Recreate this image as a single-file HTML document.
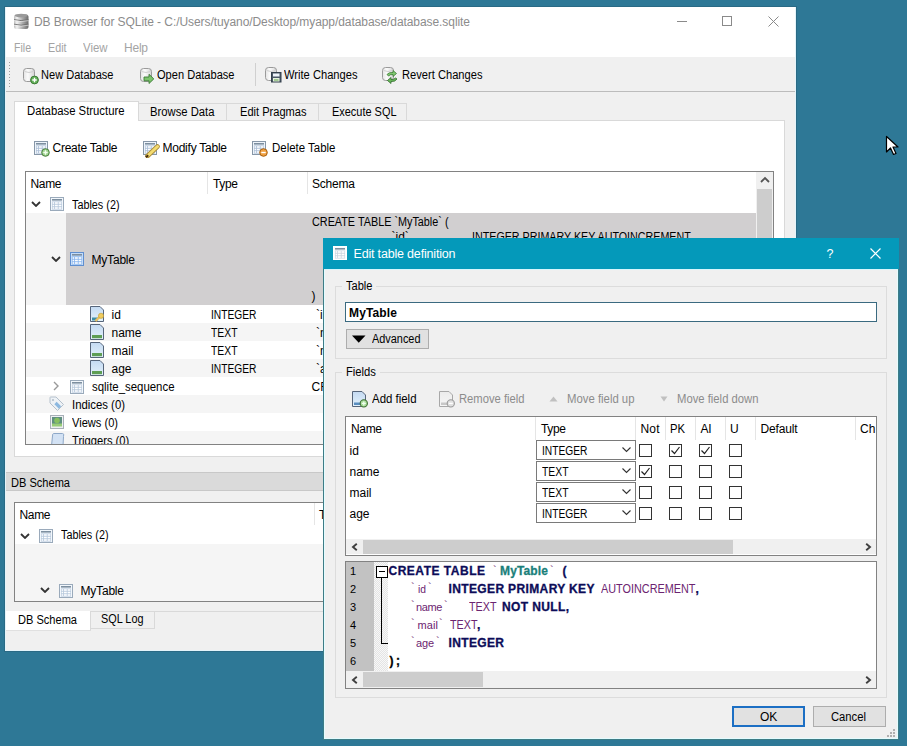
<!DOCTYPE html><html><head><meta charset="utf-8"><style>
*{margin:0;padding:0;box-sizing:border-box}
html,body{width:907px;height:746px;overflow:hidden;background:#2e7896}
body>div,body>svg{position:absolute}
div{position:absolute}
.t{white-space:pre;line-height:1;font-family:'Liberation Sans',sans-serif}
</style></head><body><div style="left:4px;top:6px;width:793px;height:646px;background:#2a6a85"></div>
<div style="left:5px;top:7px;width:791px;height:644px;background:#e4f4fa"></div>
<div style="left:6px;top:8px;width:789px;height:642px;background:#f0f0f0"></div>
<div style="left:6px;top:7px;width:789px;height:50px;background:#fff"></div>
<svg style="position:absolute;left:13px;top:13px" width="16" height="17" viewBox="0 0 16 17"><defs><linearGradient id="dbg" x1="0" x2="1"><stop offset="0" stop-color="#bdbdbd"/><stop offset="0.2" stop-color="#f2f2f2"/><stop offset="0.6" stop-color="#a8a8a8"/><stop offset="1" stop-color="#6c6c6c"/></linearGradient></defs><rect x="1" y="1.5" width="14.5" height="14.5" rx="2.5" fill="url(#dbg)"/><ellipse cx="8.2" cy="2.6" rx="6.5" ry="1.8" fill="#9a9a9a"/><path d="M1 6.6 Q8 8.6 15.5 6.6 M1 11.2 Q8 13.2 15.5 11.2" stroke="#6e6e6e" stroke-width="0.9" fill="none"/><path d="M1 7.6 Q8 9.6 15.5 7.6 M1 12.2 Q8 14.2 15.5 12.2" stroke="#f4f4f4" stroke-width="0.8" fill="none" opacity="0.7"/></svg>
<div class="t" style="left:34px;top:16px;font-size:12px;font-weight:400;color:#8c8c8c;font-family:'Liberation Sans';letter-spacing:-0.072px;">DB Browser for SQLite - C:/Users/tuyano/Desktop/myapp/database/database.sqlite</div>
<div style="left:677px;top:21px;width:10px;height:1px;background:#8a8a8a"></div>
<div style="left:722px;top:16px;width:10px;height:10px;border:1px solid #8a8a8a"></div>
<svg style="position:absolute;left:768px;top:16px" width="11" height="11" viewBox="0 0 11 11"><path d="M0.5 0.5 L10.5 10.5 M10.5 0.5 L0.5 10.5" stroke="#8a8a8a" stroke-width="1"/></svg>
<div class="t" style="left:13.5px;top:42px;font-size:12px;font-weight:400;color:#a4a4a4;font-family:'Liberation Sans';letter-spacing:0.000px;transform:scaleX(0.8788);transform-origin:0 0;">File</div>
<div class="t" style="left:47.5px;top:42px;font-size:12px;font-weight:400;color:#a4a4a4;font-family:'Liberation Sans';letter-spacing:0.000px;transform:scaleX(0.8943);transform-origin:0 0;">Edit</div>
<div class="t" style="left:83px;top:42px;font-size:12px;font-weight:400;color:#a4a4a4;font-family:'Liberation Sans';letter-spacing:0.000px;transform:scaleX(0.9497);transform-origin:0 0;">View</div>
<div class="t" style="left:124px;top:42px;font-size:12px;font-weight:400;color:#a4a4a4;font-family:'Liberation Sans';letter-spacing:-0.229px;">Help</div>
<div style="left:6px;top:57px;width:789px;height:34px;background:#f0f0f0"></div>
<div style="left:6px;top:91px;width:789px;height:1px;background:#bcbcbc"></div>
<div style="left:9px;top:62px;width:1px;height:1px;background:#a0a0a0"></div>
<div style="left:9px;top:65px;width:1px;height:1px;background:#a0a0a0"></div>
<div style="left:9px;top:68px;width:1px;height:1px;background:#a0a0a0"></div>
<div style="left:9px;top:71px;width:1px;height:1px;background:#a0a0a0"></div>
<div style="left:9px;top:74px;width:1px;height:1px;background:#a0a0a0"></div>
<div style="left:9px;top:77px;width:1px;height:1px;background:#a0a0a0"></div>
<div style="left:9px;top:80px;width:1px;height:1px;background:#a0a0a0"></div>
<div style="left:9px;top:83px;width:1px;height:1px;background:#a0a0a0"></div>
<div style="left:9px;top:86px;width:1px;height:1px;background:#a0a0a0"></div>
<div style="left:255px;top:63px;width:1px;height:23px;background:#d0d0d0"></div>
<svg style="position:absolute;left:23px;top:68px" width="17" height="17" viewBox="0 0 17 17"><defs><linearGradient id="cy23" x1="0" x2="1"><stop offset="0" stop-color="#e4e4e4"/><stop offset="0.4" stop-color="#fbfbfb"/><stop offset="1" stop-color="#d4d4d4"/></linearGradient></defs><rect x="0.5" y="0.5" width="11" height="13" rx="3" ry="3" fill="url(#cy23)" stroke="#9a9a9a"/><path d="M1.5 3.5 Q6 5.5 10.5 3.5" stroke="#cfcfcf" fill="none"/><circle cx="11.5" cy="12" r="3.9" fill="#64b25a" stroke="#3b7a34"/><path d="M11.5 9.8v4.4M9.3 12h4.4" stroke="#fff" stroke-width="1.3"/></svg>
<div class="t" style="left:41px;top:69px;font-size:12px;font-weight:400;color:#000;font-family:'Liberation Sans';letter-spacing:0.000px;transform:scaleX(0.9210);transform-origin:0 0;">New Database</div>
<svg style="position:absolute;left:140px;top:68px" width="17" height="17" viewBox="0 0 17 17"><defs><linearGradient id="cy140" x1="0" x2="1"><stop offset="0" stop-color="#e4e4e4"/><stop offset="0.4" stop-color="#fbfbfb"/><stop offset="1" stop-color="#d4d4d4"/></linearGradient></defs><rect x="0.5" y="0.5" width="11" height="13" rx="3" ry="3" fill="url(#cy140)" stroke="#9a9a9a"/><path d="M1.5 3.5 Q6 5.5 10.5 3.5" stroke="#cfcfcf" fill="none"/><path d="M4 9 h5 v-2.7 l4.8 4.6 -4.8 4.6 v-2.7 h-5z" fill="#7cc46c" stroke="#3b7a34" stroke-width="0.9"/></svg>
<div class="t" style="left:157px;top:69px;font-size:12px;font-weight:400;color:#000;font-family:'Liberation Sans';letter-spacing:0.000px;transform:scaleX(0.9219);transform-origin:0 0;">Open Database</div>
<svg style="position:absolute;left:265px;top:67px" width="17" height="17" viewBox="0 0 17 17"><defs><linearGradient id="cy265" x1="0" x2="1"><stop offset="0" stop-color="#e4e4e4"/><stop offset="0.4" stop-color="#fbfbfb"/><stop offset="1" stop-color="#d4d4d4"/></linearGradient></defs><rect x="0.5" y="0.5" width="11" height="13" rx="3" ry="3" fill="url(#cy265)" stroke="#9a9a9a"/><path d="M1.5 3.5 Q6 5.5 10.5 3.5" stroke="#cfcfcf" fill="none"/><rect x="6.5" y="5.5" width="9.5" height="9.5" fill="#4a5866" stroke="#34404c"/><rect x="8" y="6.5" width="6.5" height="3" fill="#eef4fa"/><rect x="8" y="11" width="6.5" height="3.5" fill="#e6f2e0"/><path d="M9 13h4.5" stroke="#78b060" stroke-width="1.2"/></svg>
<div class="t" style="left:284px;top:69px;font-size:12px;font-weight:400;color:#000;font-family:'Liberation Sans';letter-spacing:0.000px;transform:scaleX(0.9285);transform-origin:0 0;">Write Changes</div>
<svg style="position:absolute;left:382px;top:67px" width="17" height="17" viewBox="0 0 17 17"><defs><linearGradient id="cy382" x1="0" x2="1"><stop offset="0" stop-color="#e4e4e4"/><stop offset="0.4" stop-color="#fbfbfb"/><stop offset="1" stop-color="#d4d4d4"/></linearGradient></defs><rect x="0.5" y="0.5" width="11" height="13" rx="3" ry="3" fill="url(#cy382)" stroke="#9a9a9a"/><path d="M1.5 3.5 Q6 5.5 10.5 3.5" stroke="#cfcfcf" fill="none"/><path d="M5 7.5 Q7 5 11 5.5 L11 3.5 L14.5 6.5 L11 9.5 L11 7.5 Q8 7.2 6.5 9 Z" fill="#80c870" stroke="#3b7a34" stroke-width="0.8"/><path d="M15 12 Q13 15 9 14.5 L9 16.5 L5.5 13.5 L9 10.5 L9 12.5 Q12 12.8 13.5 11 Z" fill="#6ab85c" stroke="#2f6a2a" stroke-width="0.8"/></svg>
<div class="t" style="left:402px;top:69px;font-size:12px;font-weight:400;color:#000;font-family:'Liberation Sans';letter-spacing:0.000px;transform:scaleX(0.9283);transform-origin:0 0;">Revert Changes</div>
<div style="left:14px;top:120px;width:771px;height:337px;background:#fff;border:1px solid #d9d9d9"></div>
<div style="left:138px;top:103px;width:89px;height:18px;background:#f0f0f0;border:1px solid #d9d9d9"></div>
<div class="t" style="left:149.5px;top:106px;font-size:12px;font-weight:400;color:#000;font-family:'Liberation Sans';letter-spacing:0.000px;transform:scaleX(0.9388);transform-origin:0 0;">Browse Data</div>
<div style="left:226px;top:103px;width:93px;height:18px;background:#f0f0f0;border:1px solid #d9d9d9"></div>
<div class="t" style="left:239.5px;top:106px;font-size:12px;font-weight:400;color:#000;font-family:'Liberation Sans';letter-spacing:0.000px;transform:scaleX(0.9232);transform-origin:0 0;">Edit Pragmas</div>
<div style="left:318px;top:103px;width:89px;height:18px;background:#f0f0f0;border:1px solid #d9d9d9"></div>
<div class="t" style="left:331.5px;top:106px;font-size:12px;font-weight:400;color:#000;font-family:'Liberation Sans';letter-spacing:0.000px;transform:scaleX(0.9121);transform-origin:0 0;">Execute SQL</div>
<div style="left:14px;top:101px;width:125px;height:20px;background:#fff;border:1px solid #d9d9d9;border-bottom:none"></div>
<div class="t" style="left:26.5px;top:105px;font-size:12px;font-weight:400;color:#000;font-family:'Liberation Sans';letter-spacing:0.000px;transform:scaleX(0.9430);transform-origin:0 0;">Database Structure</div>
<svg style="position:absolute;left:34px;top:141px" width="17" height="17" viewBox="0 0 17 17"><rect x="0.5" y="0.5" width="13" height="13" fill="#eef4fb" stroke="#8797a8"/><rect x="2" y="2" width="10" height="1.6" fill="#7d8fa0"/><rect x="2" y="4.5" width="10" height="8" fill="#a9bdd6"/><rect x="2.6" y="5.2" width="1.6" height="1.6" fill="#fdfeff"/><rect x="5" y="5.2" width="2.8" height="1.6" fill="#fdfeff"/><rect x="8.6" y="5.2" width="2.8" height="1.6" fill="#fdfeff"/><rect x="2.6" y="7.7" width="1.6" height="1.6" fill="#fdfeff"/><rect x="5" y="7.7" width="2.8" height="1.6" fill="#fdfeff"/><rect x="8.6" y="7.7" width="2.8" height="1.6" fill="#fdfeff"/><rect x="2.6" y="10.2" width="1.6" height="1.6" fill="#fdfeff"/><rect x="5" y="10.2" width="2.8" height="1.6" fill="#fdfeff"/><rect x="8.6" y="10.2" width="2.8" height="1.6" fill="#fdfeff"/><circle cx="11.5" cy="11.5" r="3.8" fill="#9ad08a" stroke="#4a7e3e" stroke-width="1"/><path d="M11.5 9.3v4.4M9.3 11.5h4.4" stroke="#f4fff0" stroke-width="1.4"/></svg>
<div class="t" style="left:52.5px;top:142px;font-size:12px;font-weight:400;color:#000;font-family:'Liberation Sans';letter-spacing:-0.257px;">Create Table</div>
<svg style="position:absolute;left:143px;top:141px" width="17" height="17" viewBox="0 0 17 17"><rect x="0.5" y="0.5" width="13" height="13" fill="#eef4fb" stroke="#8797a8"/><rect x="2" y="2" width="10" height="1.6" fill="#7d8fa0"/><rect x="2" y="4.5" width="10" height="8" fill="#a9bdd6"/><rect x="2.6" y="5.2" width="1.6" height="1.6" fill="#fdfeff"/><rect x="5" y="5.2" width="2.8" height="1.6" fill="#fdfeff"/><rect x="8.6" y="5.2" width="2.8" height="1.6" fill="#fdfeff"/><rect x="2.6" y="7.7" width="1.6" height="1.6" fill="#fdfeff"/><rect x="5" y="7.7" width="2.8" height="1.6" fill="#fdfeff"/><rect x="8.6" y="7.7" width="2.8" height="1.6" fill="#fdfeff"/><rect x="2.6" y="10.2" width="1.6" height="1.6" fill="#fdfeff"/><rect x="5" y="10.2" width="2.8" height="1.6" fill="#fdfeff"/><rect x="8.6" y="10.2" width="2.8" height="1.6" fill="#fdfeff"/><path d="M4.5 15 L14.5 5.5" stroke="#a88a38" stroke-width="4.6" stroke-linecap="round"/><path d="M4.5 15 L14.5 5.5" stroke="#f4dc70" stroke-width="3" stroke-linecap="round"/><path d="M3 16.2 L5.2 14.2" stroke="#4a3010" stroke-width="2.2"/></svg>
<div class="t" style="left:162.5px;top:142px;font-size:12px;font-weight:400;color:#000;font-family:'Liberation Sans';letter-spacing:-0.241px;">Modify Table</div>
<svg style="position:absolute;left:252px;top:141px" width="17" height="17" viewBox="0 0 17 17"><rect x="0.5" y="0.5" width="13" height="13" fill="#eef4fb" stroke="#8797a8"/><rect x="2" y="2" width="10" height="1.6" fill="#7d8fa0"/><rect x="2" y="4.5" width="10" height="8" fill="#a9bdd6"/><rect x="2.6" y="5.2" width="1.6" height="1.6" fill="#fdfeff"/><rect x="5" y="5.2" width="2.8" height="1.6" fill="#fdfeff"/><rect x="8.6" y="5.2" width="2.8" height="1.6" fill="#fdfeff"/><rect x="2.6" y="7.7" width="1.6" height="1.6" fill="#fdfeff"/><rect x="5" y="7.7" width="2.8" height="1.6" fill="#fdfeff"/><rect x="8.6" y="7.7" width="2.8" height="1.6" fill="#fdfeff"/><rect x="2.6" y="10.2" width="1.6" height="1.6" fill="#fdfeff"/><rect x="5" y="10.2" width="2.8" height="1.6" fill="#fdfeff"/><rect x="8.6" y="10.2" width="2.8" height="1.6" fill="#fdfeff"/><circle cx="11.5" cy="11.5" r="3.8" fill="#f0a040" stroke="#a86010" stroke-width="1"/><path d="M9.3 11.5h4.4" stroke="#fff" stroke-width="1.4"/></svg>
<div class="t" style="left:271.5px;top:142px;font-size:12px;font-weight:400;color:#000;font-family:'Liberation Sans';letter-spacing:0.000px;transform:scaleX(0.9549);transform-origin:0 0;">Delete Table</div>
<div style="left:25px;top:171px;width:749px;height:274px;background:#fff;border:1px solid #828282"></div>
<div style="left:207px;top:172px;width:1px;height:22px;background:#e5e5e5"></div>
<div style="left:307px;top:172px;width:1px;height:22px;background:#e5e5e5"></div>
<div class="t" style="left:30.5px;top:178px;font-size:12px;font-weight:400;color:#000;font-family:'Liberation Sans';letter-spacing:-0.339px;">Name</div>
<div class="t" style="left:213px;top:178px;font-size:12px;font-weight:400;color:#000;font-family:'Liberation Sans';letter-spacing:-0.339px;">Type</div>
<div class="t" style="left:312px;top:178px;font-size:12px;font-weight:400;color:#000;font-family:'Liberation Sans';letter-spacing:-0.206px;">Schema</div>
<div style="left:26px;top:195px;width:730px;height:18px;background:#fff"></div>
<svg style="position:absolute;left:31px;top:201px" width="10" height="6" viewBox="0 0 10 6"><path d="M1 1 L5 5 L9 1" stroke="#333" stroke-width="1.8" fill="none"/></svg>
<svg style="position:absolute;left:50px;top:197px" width="14" height="14" viewBox="0 0 14 14"><rect x="0.5" y="0.5" width="13" height="13" fill="#f2f7fc" stroke="#9aaabb"/><rect x="2" y="2" width="10" height="1.6" fill="#7d8fa0"/><rect x="2" y="4.5" width="10" height="8" fill="#b6c8dc"/><rect x="2.6" y="5.2" width="1.6" height="1.6" fill="#fdfeff"/><rect x="5" y="5.2" width="2.8" height="1.6" fill="#fdfeff"/><rect x="8.6" y="5.2" width="2.8" height="1.6" fill="#fdfeff"/><rect x="2.6" y="7.7" width="1.6" height="1.6" fill="#fdfeff"/><rect x="5" y="7.7" width="2.8" height="1.6" fill="#fdfeff"/><rect x="8.6" y="7.7" width="2.8" height="1.6" fill="#fdfeff"/><rect x="2.6" y="10.2" width="1.6" height="1.6" fill="#fdfeff"/><rect x="5" y="10.2" width="2.8" height="1.6" fill="#fdfeff"/><rect x="8.6" y="10.2" width="2.8" height="1.6" fill="#fdfeff"/></svg>
<div class="t" style="left:71.5px;top:198.5px;font-size:12px;font-weight:400;color:#000;font-family:'Liberation Sans';letter-spacing:0.000px;transform:scaleX(0.9015);transform-origin:0 0;">Tables (2)</div>
<div style="left:26px;top:213px;width:730px;height:92px;background:#f5f5f5"></div>
<div style="left:66px;top:213px;width:690px;height:92px;background:#d1cfd0"></div>
<svg style="position:absolute;left:51px;top:256px" width="10" height="6" viewBox="0 0 10 6"><path d="M1 1 L5 5 L9 1" stroke="#333" stroke-width="1.8" fill="none"/></svg>
<svg style="position:absolute;left:70px;top:252px" width="14" height="14" viewBox="0 0 14 14"><rect x="0.5" y="0.5" width="13" height="13" fill="#c4dcf8" stroke="#5f8fd0"/><rect x="2" y="2" width="10" height="1.6" fill="#7d8fa0"/><rect x="2" y="4.5" width="10" height="8" fill="#86b4ee"/><rect x="2.6" y="5.2" width="1.6" height="1.6" fill="#fdfeff"/><rect x="5" y="5.2" width="2.8" height="1.6" fill="#fdfeff"/><rect x="8.6" y="5.2" width="2.8" height="1.6" fill="#fdfeff"/><rect x="2.6" y="7.7" width="1.6" height="1.6" fill="#fdfeff"/><rect x="5" y="7.7" width="2.8" height="1.6" fill="#fdfeff"/><rect x="8.6" y="7.7" width="2.8" height="1.6" fill="#fdfeff"/><rect x="2.6" y="10.2" width="1.6" height="1.6" fill="#fdfeff"/><rect x="5" y="10.2" width="2.8" height="1.6" fill="#fdfeff"/><rect x="8.6" y="10.2" width="2.8" height="1.6" fill="#fdfeff"/></svg>
<div class="t" style="left:91.5px;top:254px;font-size:12px;font-weight:400;color:#000;font-family:'Liberation Sans';letter-spacing:-0.198px;">MyTable</div>
<div class="t" style="left:311.5px;top:216px;font-size:12px;font-weight:400;color:#000;font-family:'Liberation Sans';letter-spacing:0.000px;transform:scaleX(0.9017);transform-origin:0 0;">CREATE TABLE `MyTable` (</div>
<div class="t" style="left:391.5px;top:230.5px;font-size:12px;font-weight:400;color:#000;font-family:'Liberation Sans';letter-spacing:0.000px;">`id`</div>
<div class="t" style="left:471.5px;top:230.5px;font-size:12px;font-weight:400;color:#000;font-family:'Liberation Sans';letter-spacing:0.000px;transform:scaleX(0.8921);transform-origin:0 0;">INTEGER PRIMARY KEY AUTOINCREMENT,</div>
<div class="t" style="left:311.5px;top:290px;font-size:12px;font-weight:400;color:#000;font-family:'Liberation Sans';letter-spacing:0.000px;">)</div>
<div style="left:26px;top:305px;width:730px;height:18px;background:#fff"></div>
<svg style="position:absolute;left:90px;top:306px" width="15" height="17" viewBox="0 0 15 17"><defs><linearGradient id="fg90_306" x1="0" y1="0" x2="0" y2="1"><stop offset="0" stop-color="#c4daf2"/><stop offset="1" stop-color="#e4f2fb"/></linearGradient></defs><path d="M0.5 0.5 H10 L13.5 4 V15.5 H0.5 Z" fill="url(#fg90_306)" stroke="#56657a"/><rect x="2" y="11.5" width="6" height="3" fill="#3e8ea8"/><path d="M5.5 15 L9.5 11" stroke="#e8c060" stroke-width="2.4"/><circle cx="11" cy="9.8" r="2.6" fill="#f0cc60" stroke="#c09a30" stroke-width="0.6"/></svg>
<div class="t" style="left:111.5px;top:309px;font-size:12px;font-weight:400;color:#000;font-family:'Liberation Sans';letter-spacing:0.000px;">id</div>
<div class="t" style="left:211px;top:309px;font-size:12px;font-weight:400;color:#000;font-family:'Liberation Sans';letter-spacing:0.000px;transform:scaleX(0.8530);transform-origin:0 0;">INTEGER</div>
<div class="t" style="left:316px;top:309px;font-size:12px;font-weight:400;color:#000;font-family:'Liberation Sans';letter-spacing:0.000px;">`i</div>
<div style="left:26px;top:323px;width:730px;height:18px;background:#f5f5f5"></div>
<svg style="position:absolute;left:90px;top:324px" width="15" height="17" viewBox="0 0 15 17"><defs><linearGradient id="fg90_324" x1="0" y1="0" x2="0" y2="1"><stop offset="0" stop-color="#c4daf2"/><stop offset="1" stop-color="#e4f2fb"/></linearGradient></defs><path d="M0.5 0.5 H10 L13.5 4 V15.5 H0.5 Z" fill="url(#fg90_324)" stroke="#56657a"/><rect x="2" y="11" width="10" height="3.2" fill="#5e9e54"/></svg>
<div class="t" style="left:111.5px;top:327px;font-size:12px;font-weight:400;color:#000;font-family:'Liberation Sans';letter-spacing:0.000px;">name</div>
<div class="t" style="left:211px;top:327px;font-size:12px;font-weight:400;color:#000;font-family:'Liberation Sans';letter-spacing:0.000px;transform:scaleX(0.8640);transform-origin:0 0;">TEXT</div>
<div class="t" style="left:316px;top:327px;font-size:12px;font-weight:400;color:#000;font-family:'Liberation Sans';letter-spacing:0.000px;">`n</div>
<div style="left:26px;top:341px;width:730px;height:18px;background:#fff"></div>
<svg style="position:absolute;left:90px;top:342px" width="15" height="17" viewBox="0 0 15 17"><defs><linearGradient id="fg90_342" x1="0" y1="0" x2="0" y2="1"><stop offset="0" stop-color="#c4daf2"/><stop offset="1" stop-color="#e4f2fb"/></linearGradient></defs><path d="M0.5 0.5 H10 L13.5 4 V15.5 H0.5 Z" fill="url(#fg90_342)" stroke="#56657a"/><rect x="2" y="11" width="10" height="3.2" fill="#5e9e54"/></svg>
<div class="t" style="left:111.5px;top:345px;font-size:12px;font-weight:400;color:#000;font-family:'Liberation Sans';letter-spacing:0.000px;">mail</div>
<div class="t" style="left:211px;top:345px;font-size:12px;font-weight:400;color:#000;font-family:'Liberation Sans';letter-spacing:0.000px;transform:scaleX(0.8640);transform-origin:0 0;">TEXT</div>
<div class="t" style="left:316px;top:345px;font-size:12px;font-weight:400;color:#000;font-family:'Liberation Sans';letter-spacing:0.000px;">`m</div>
<div style="left:26px;top:359px;width:730px;height:18px;background:#f5f5f5"></div>
<svg style="position:absolute;left:90px;top:360px" width="15" height="17" viewBox="0 0 15 17"><defs><linearGradient id="fg90_360" x1="0" y1="0" x2="0" y2="1"><stop offset="0" stop-color="#c4daf2"/><stop offset="1" stop-color="#e4f2fb"/></linearGradient></defs><path d="M0.5 0.5 H10 L13.5 4 V15.5 H0.5 Z" fill="url(#fg90_360)" stroke="#56657a"/><rect x="2" y="11" width="10" height="3.2" fill="#5e9e54"/></svg>
<div class="t" style="left:111.5px;top:363px;font-size:12px;font-weight:400;color:#000;font-family:'Liberation Sans';letter-spacing:0.000px;">age</div>
<div class="t" style="left:211px;top:363px;font-size:12px;font-weight:400;color:#000;font-family:'Liberation Sans';letter-spacing:0.000px;transform:scaleX(0.8530);transform-origin:0 0;">INTEGER</div>
<div class="t" style="left:316px;top:363px;font-size:12px;font-weight:400;color:#000;font-family:'Liberation Sans';letter-spacing:0.000px;">`a</div>
<div style="left:26px;top:377px;width:730px;height:18px;background:#fff"></div>
<svg style="position:absolute;left:53px;top:381px" width="6" height="10" viewBox="0 0 6 10"><path d="M1 1 L5 5 L1 9" stroke="#999" stroke-width="1.4" fill="none"/></svg>
<svg style="position:absolute;left:70px;top:380px" width="14" height="14" viewBox="0 0 14 14"><rect x="0.5" y="0.5" width="13" height="13" fill="#f2f7fc" stroke="#9aaabb"/><rect x="2" y="2" width="10" height="1.6" fill="#7d8fa0"/><rect x="2" y="4.5" width="10" height="8" fill="#b6c8dc"/><rect x="2.6" y="5.2" width="1.6" height="1.6" fill="#fdfeff"/><rect x="5" y="5.2" width="2.8" height="1.6" fill="#fdfeff"/><rect x="8.6" y="5.2" width="2.8" height="1.6" fill="#fdfeff"/><rect x="2.6" y="7.7" width="1.6" height="1.6" fill="#fdfeff"/><rect x="5" y="7.7" width="2.8" height="1.6" fill="#fdfeff"/><rect x="8.6" y="7.7" width="2.8" height="1.6" fill="#fdfeff"/><rect x="2.6" y="10.2" width="1.6" height="1.6" fill="#fdfeff"/><rect x="5" y="10.2" width="2.8" height="1.6" fill="#fdfeff"/><rect x="8.6" y="10.2" width="2.8" height="1.6" fill="#fdfeff"/></svg>
<div class="t" style="left:91.5px;top:381px;font-size:12px;font-weight:400;color:#000;font-family:'Liberation Sans';letter-spacing:0.000px;transform:scaleX(0.9512);transform-origin:0 0;">sqlite_sequence</div>
<div class="t" style="left:311.5px;top:381px;font-size:12px;font-weight:400;color:#000;font-family:'Liberation Sans';letter-spacing:0.000px;">CR</div>
<div style="left:26px;top:395px;width:730px;height:18px;background:#f5f5f5"></div>
<svg style="position:absolute;left:49px;top:396px" width="16" height="16" viewBox="0 0 16 16"><path d="M1 1.5 Q1 1 1.5 1 L7 1 L14.5 8.5 L8.5 14.5 L1 7 Z" fill="#eef2f6" stroke="#b4c0cc"/><path d="M6.5 7 L11 11.5" stroke="#8cb8e0" stroke-width="3.2"/><circle cx="4" cy="4" r="1.1" fill="#b4c0cc"/></svg>
<div class="t" style="left:71.5px;top:399px;font-size:12px;font-weight:400;color:#000;font-family:'Liberation Sans';letter-spacing:0.000px;transform:scaleX(0.9459);transform-origin:0 0;">Indices (0)</div>
<div style="left:26px;top:413px;width:730px;height:18px;background:#fff"></div>
<svg style="position:absolute;left:50px;top:415px" width="14" height="14" viewBox="0 0 14 14"><rect x="0.5" y="0.5" width="13" height="13" fill="#eef0f2" stroke="#a8b0b8"/><rect x="2" y="2" width="10" height="9" fill="#5f8f80"/><circle cx="7" cy="5.5" r="2.8" fill="#86c060"/><rect x="2" y="8.5" width="10" height="3" fill="#98cc78"/></svg>
<div class="t" style="left:71.5px;top:416.5px;font-size:12px;font-weight:400;color:#000;font-family:'Liberation Sans';letter-spacing:0.000px;transform:scaleX(0.9238);transform-origin:0 0;">Views (0)</div>
<div style="left:26px;top:431px;width:730px;height:13px;background:#f5f5f5"></div>
<div style="left:26px;top:431px;width:300px;height:13px;overflow:hidden"><svg style="position:absolute;left:24px;top:1px" width="16" height="14"><path d="M3.5 1.5 H12.5 Q14.5 1.5 13.5 4.5 L13 14 H1.5 L2.5 4 Q2.5 1.5 3.5 1.5 Z" fill="#d3e2f4" stroke="#8ea8c8"/></svg><div class="t" style="left:45.5px;top:4px;font-size:12px;color:#000;transform:scaleX(0.93);transform-origin:0 0">Triggers (0)</div></div>
<div style="left:756px;top:172px;width:17px;height:272px;background:#f0f0f0"></div>
<div style="left:757px;top:189px;width:15px;height:255px;background:#cdcdcd"></div>
<svg style="position:absolute;left:759px;top:175px" width="12" height="10" viewBox="0 0 12 10"><path d="M2 7 L6 3 L10 7" stroke="#555" stroke-width="1.8" fill="none"/></svg>
<div style="left:6px;top:472px;width:789px;height:19px;background:#dadada;border-top:1px solid #c8c8c8;border-bottom:1px solid #c8c8c8"></div>
<div class="t" style="left:10.5px;top:476.5px;font-size:12px;font-weight:400;color:#000;font-family:'Liberation Sans';letter-spacing:0.000px;transform:scaleX(0.9214);transform-origin:0 0;">DB Schema</div>
<div style="left:14px;top:502px;width:800px;height:100px;background:#fff;border:1px solid #828282"></div>
<div style="left:314px;top:503px;width:1px;height:22px;background:#e5e5e5"></div>
<div class="t" style="left:19.5px;top:509px;font-size:12px;font-weight:400;color:#000;font-family:'Liberation Sans';letter-spacing:-0.339px;">Name</div>
<div class="t" style="left:319px;top:509px;font-size:12px;font-weight:400;color:#000;font-family:'Liberation Sans';letter-spacing:0.000px;">T</div>
<svg style="position:absolute;left:20px;top:533px" width="10" height="6" viewBox="0 0 10 6"><path d="M1 1 L5 5 L9 1" stroke="#333" stroke-width="1.8" fill="none"/></svg>
<svg style="position:absolute;left:39px;top:529px" width="14" height="14" viewBox="0 0 14 14"><rect x="0.5" y="0.5" width="13" height="13" fill="#f2f7fc" stroke="#9aaabb"/><rect x="2" y="2" width="10" height="1.6" fill="#7d8fa0"/><rect x="2" y="4.5" width="10" height="8" fill="#b6c8dc"/><rect x="2.6" y="5.2" width="1.6" height="1.6" fill="#fdfeff"/><rect x="5" y="5.2" width="2.8" height="1.6" fill="#fdfeff"/><rect x="8.6" y="5.2" width="2.8" height="1.6" fill="#fdfeff"/><rect x="2.6" y="7.7" width="1.6" height="1.6" fill="#fdfeff"/><rect x="5" y="7.7" width="2.8" height="1.6" fill="#fdfeff"/><rect x="8.6" y="7.7" width="2.8" height="1.6" fill="#fdfeff"/><rect x="2.6" y="10.2" width="1.6" height="1.6" fill="#fdfeff"/><rect x="5" y="10.2" width="2.8" height="1.6" fill="#fdfeff"/><rect x="8.6" y="10.2" width="2.8" height="1.6" fill="#fdfeff"/></svg>
<div class="t" style="left:61px;top:529px;font-size:12px;font-weight:400;color:#000;font-family:'Liberation Sans';letter-spacing:0.000px;transform:scaleX(0.9015);transform-origin:0 0;">Tables (2)</div>
<div style="left:15px;top:544px;width:800px;height:57px;background:#f5f5f5"></div>
<svg style="position:absolute;left:40px;top:587px" width="10" height="6" viewBox="0 0 10 6"><path d="M1 1 L5 5 L9 1" stroke="#333" stroke-width="1.8" fill="none"/></svg>
<svg style="position:absolute;left:59px;top:584px" width="14" height="14" viewBox="0 0 14 14"><rect x="0.5" y="0.5" width="13" height="13" fill="#f2f7fc" stroke="#9aaabb"/><rect x="2" y="2" width="10" height="1.6" fill="#7d8fa0"/><rect x="2" y="4.5" width="10" height="8" fill="#b6c8dc"/><rect x="2.6" y="5.2" width="1.6" height="1.6" fill="#fdfeff"/><rect x="5" y="5.2" width="2.8" height="1.6" fill="#fdfeff"/><rect x="8.6" y="5.2" width="2.8" height="1.6" fill="#fdfeff"/><rect x="2.6" y="7.7" width="1.6" height="1.6" fill="#fdfeff"/><rect x="5" y="7.7" width="2.8" height="1.6" fill="#fdfeff"/><rect x="8.6" y="7.7" width="2.8" height="1.6" fill="#fdfeff"/><rect x="2.6" y="10.2" width="1.6" height="1.6" fill="#fdfeff"/><rect x="5" y="10.2" width="2.8" height="1.6" fill="#fdfeff"/><rect x="8.6" y="10.2" width="2.8" height="1.6" fill="#fdfeff"/></svg>
<div class="t" style="left:80.5px;top:584.5px;font-size:12px;font-weight:400;color:#000;font-family:'Liberation Sans';letter-spacing:-0.198px;">MyTable</div>
<div style="left:90px;top:611px;width:705px;height:1px;background:#d9d9d9"></div>
<div style="left:90px;top:612px;width:65px;height:17px;background:#f0f0f0;border-right:1px solid #d9d9d9;border-bottom:1px solid #d9d9d9"></div>
<div style="left:6px;top:611px;width:85px;height:20px;background:#fff;border-right:1px solid #d9d9d9;border-bottom:1px solid #e0e0e0"></div>
<div class="t" style="left:17.5px;top:614px;font-size:12px;font-weight:400;color:#000;font-family:'Liberation Sans';letter-spacing:0.000px;transform:scaleX(0.9214);transform-origin:0 0;">DB Schema</div>
<div class="t" style="left:100.5px;top:613px;font-size:12px;font-weight:400;color:#000;font-family:'Liberation Sans';letter-spacing:0.000px;transform:scaleX(0.9058);transform-origin:0 0;">SQL Log</div>
<div style="left:323px;top:238px;width:576px;height:502px;background:#3d7c86"></div>
<div style="left:324px;top:239px;width:574px;height:500px;background:#e4fcff"></div>
<div style="left:325px;top:240px;width:572px;height:498px;background:#f0f0f0"></div>
<div style="left:323px;top:238px;width:576px;height:31px;background:#0499ba"></div>
<div style="left:324px;top:269px;width:574px;height:1px;background:#d8f6fc"></div>
<svg style="position:absolute;left:333px;top:246px" width="14" height="14" viewBox="0 0 14 14"><rect x="0.5" y="0.5" width="13" height="13" fill="#f6fcff" stroke="#ffffff"/><rect x="2" y="2" width="10" height="1.6" fill="#7d8fa0"/><rect x="2" y="4.5" width="10" height="8" fill="#c8d4e0"/><rect x="2.6" y="5.2" width="1.6" height="1.6" fill="#fdfeff"/><rect x="5" y="5.2" width="2.8" height="1.6" fill="#fdfeff"/><rect x="8.6" y="5.2" width="2.8" height="1.6" fill="#fdfeff"/><rect x="2.6" y="7.7" width="1.6" height="1.6" fill="#fdfeff"/><rect x="5" y="7.7" width="2.8" height="1.6" fill="#fdfeff"/><rect x="8.6" y="7.7" width="2.8" height="1.6" fill="#fdfeff"/><rect x="2.6" y="10.2" width="1.6" height="1.6" fill="#fdfeff"/><rect x="5" y="10.2" width="2.8" height="1.6" fill="#fdfeff"/><rect x="8.6" y="10.2" width="2.8" height="1.6" fill="#fdfeff"/></svg>
<div class="t" style="left:353.5px;top:248px;font-size:12.5px;font-weight:400;color:#fff;font-family:'Liberation Sans';letter-spacing:-0.182px;">Edit table definition</div>
<div class="t" style="left:826.5px;top:248px;font-size:12.5px;font-weight:400;color:#fff;font-family:'Liberation Sans';letter-spacing:0.000px;">?</div>
<svg style="position:absolute;left:870px;top:248px" width="11" height="11" viewBox="0 0 11 11"><path d="M0.5 0.5 L10.5 10.5 M10.5 0.5 L0.5 10.5" stroke="#fff" stroke-width="1.2"/></svg>
<div style="left:335px;top:286px;width:552px;height:73px;border:1px solid #dcdcdc"></div>
<div style="left:342px;top:280px;width:34px;height:12px;background:#f0f0f0"></div>
<div class="t" style="left:345.5px;top:280px;font-size:12px;font-weight:400;color:#000;font-family:'Liberation Sans';letter-spacing:0.000px;transform:scaleX(0.9237);transform-origin:0 0;">Table</div>
<div style="left:345px;top:302px;width:532px;height:20px;background:#fff;border:1px solid #3a6a80"></div>
<div class="t" style="left:349px;top:306.5px;font-size:12px;font-weight:700;color:#000;font-family:'Liberation Sans';letter-spacing:0.146px;">MyTable</div>
<div style="left:346px;top:329px;width:83px;height:20px;background:#e1e1e1;border:1px solid #adadad"></div>
<svg style="position:absolute;left:352px;top:334.5px" width="14" height="8" viewBox="0 0 14 8"><path d="M0 0.5 L13.5 0.5 L6.75 7.8 Z" fill="#000"/></svg>
<div class="t" style="left:372px;top:332.5px;font-size:12px;font-weight:400;color:#000;font-family:'Liberation Sans';letter-spacing:0.000px;transform:scaleX(0.9087);transform-origin:0 0;">Advanced</div>
<div style="left:335px;top:372px;width:552px;height:326px;border:1px solid #dcdcdc"></div>
<div style="left:342px;top:366px;width:38px;height:12px;background:#f0f0f0"></div>
<div class="t" style="left:345.5px;top:366px;font-size:12px;font-weight:400;color:#000;font-family:'Liberation Sans';letter-spacing:0.000px;transform:scaleX(0.9370);transform-origin:0 0;">Fields</div>
<svg style="position:absolute;left:352px;top:391px" width="17" height="17" viewBox="0 0 17 17"><defs><linearGradient id="dg352" x1="0" y1="0" x2="0" y2="1"><stop offset="0" stop-color="#c4daf2"/><stop offset="1" stop-color="#e4f2fb"/></linearGradient></defs><path d="M0.5 0.5 H10 L13.5 4 V15.5 H0.5 Z" fill="url(#dg352)" stroke="#56657a"/><rect x="2" y="11.5" width="8" height="2.5" fill="#5a8ec0"/><circle cx="11.8" cy="12.4" r="3.6" fill="#a8dc98" stroke="#3e6e34" stroke-width="1.1"/><path d="M11.8 10.4v4M9.8 12.4h4" stroke="#f0fff0" stroke-width="1.3"/></svg>
<div class="t" style="left:371.5px;top:393px;font-size:12px;font-weight:400;color:#000;font-family:'Liberation Sans';letter-spacing:0.000px;transform:scaleX(0.9528);transform-origin:0 0;">Add field</div>
<svg style="position:absolute;left:439px;top:391px" width="17" height="17" viewBox="0 0 17 17"><defs><linearGradient id="dg439" x1="0" y1="0" x2="0" y2="1"><stop offset="0" stop-color="#ececec"/><stop offset="1" stop-color="#f6f6f6"/></linearGradient></defs><path d="M0.5 0.5 H10 L13.5 4 V15.5 H0.5 Z" fill="url(#dg439)" stroke="#a8a8a8"/><rect x="2" y="11.5" width="8" height="2.5" fill="#c8c8c8"/><circle cx="11.8" cy="12.4" r="3.6" fill="#e0e0e0" stroke="#9a9a9a" stroke-width="1.1"/><path d="M9.8 12.4h4" stroke="#fff" stroke-width="1.3"/></svg>
<div class="t" style="left:458.5px;top:393px;font-size:12px;font-weight:400;color:#8c8c8c;font-family:'Liberation Sans';letter-spacing:0.000px;transform:scaleX(0.9353);transform-origin:0 0;">Remove field</div>
<svg style="position:absolute;left:549px;top:396px" width="9" height="6" viewBox="0 0 9 6"><path d="M0.5 5.5 L4.5 0.5 L8.5 5.5 Z" fill="#c0c0c0"/></svg>
<div class="t" style="left:566.5px;top:393px;font-size:12px;font-weight:400;color:#8c8c8c;font-family:'Liberation Sans';letter-spacing:0.000px;transform:scaleX(0.9457);transform-origin:0 0;">Move field up</div>
<svg style="position:absolute;left:660px;top:396px" width="8" height="6" viewBox="0 0 8 6"><path d="M0.5 0.5 L4 5.5 L7.5 0.5 Z" fill="#c0c0c0"/></svg>
<div class="t" style="left:676.5px;top:393px;font-size:12px;font-weight:400;color:#8c8c8c;font-family:'Liberation Sans';letter-spacing:0.000px;transform:scaleX(0.9398);transform-origin:0 0;">Move field down</div>
<div style="left:345px;top:416px;width:532px;height:140px;background:#fff;border:1px solid #828282"></div>
<div style="left:535px;top:417px;width:1px;height:23px;background:#e5e5e5"></div>
<div style="left:635px;top:417px;width:1px;height:23px;background:#e5e5e5"></div>
<div style="left:665px;top:417px;width:1px;height:23px;background:#e5e5e5"></div>
<div style="left:695px;top:417px;width:1px;height:23px;background:#e5e5e5"></div>
<div style="left:725px;top:417px;width:1px;height:23px;background:#e5e5e5"></div>
<div style="left:755px;top:417px;width:1px;height:23px;background:#e5e5e5"></div>
<div style="left:855px;top:417px;width:1px;height:23px;background:#e5e5e5"></div>
<div class="t" style="left:351px;top:423px;font-size:12px;font-weight:400;color:#000;font-family:'Liberation Sans';letter-spacing:-0.339px;">Name</div>
<div class="t" style="left:541px;top:423px;font-size:12px;font-weight:400;color:#000;font-family:'Liberation Sans';letter-spacing:-0.339px;">Type</div>
<div class="t" style="left:640.5px;top:423px;font-size:12px;font-weight:400;color:#000;font-family:'Liberation Sans';letter-spacing:0.156px;">Not</div>
<div class="t" style="left:670px;top:423px;font-size:12px;font-weight:400;color:#000;font-family:'Liberation Sans';letter-spacing:0.000px;transform:scaleX(0.9366);transform-origin:0 0;">PK</div>
<div class="t" style="left:700.5px;top:423px;font-size:12px;font-weight:400;color:#000;font-family:'Liberation Sans';letter-spacing:-0.344px;">AI</div>
<div class="t" style="left:730px;top:423px;font-size:12px;font-weight:400;color:#000;font-family:'Liberation Sans';letter-spacing:-0.672px;">U</div>
<div class="t" style="left:760.5px;top:423px;font-size:12px;font-weight:400;color:#000;font-family:'Liberation Sans';letter-spacing:-0.172px;">Default</div>
<div style="left:855px;top:417px;width:21px;height:23px;overflow:hidden"><div class="t" style="left:5px;top:6px;font-size:12px">Ch</div></div>
<div class="t" style="left:349.5px;top:445px;font-size:12px;font-weight:400;color:#000;font-family:'Liberation Sans';letter-spacing:0.000px;">id</div>
<div style="left:536px;top:440px;width:100px;height:20px;background:#fff;border:1px solid #7a7a7a"></div>
<div class="t" style="left:542px;top:444.5px;font-size:12px;font-weight:400;color:#000;font-family:'Liberation Sans';letter-spacing:0.000px;transform:scaleX(0.8530);transform-origin:0 0;">INTEGER</div>
<svg style="position:absolute;left:622px;top:447px" width="10" height="6" viewBox="0 0 10 6"><path d="M0.5 0.5 L4.5 4.5 L8.5 0.5" stroke="#333" stroke-width="1.1" fill="none"/></svg>
<div style="left:639px;top:444px;width:13px;height:13px;background:#fff;border:1px solid #333"></div>
<div style="left:669px;top:444px;width:13px;height:13px;background:#fff;border:1px solid #333"></div>
<svg style="position:absolute;left:671px;top:446px" width="9" height="9" viewBox="0 0 9 9"><path d="M0.5 4.5 L3.5 7.5 L8.5 1" stroke="#222" stroke-width="1.2" fill="none"/></svg>
<div style="left:699px;top:444px;width:13px;height:13px;background:#fff;border:1px solid #333"></div>
<svg style="position:absolute;left:701px;top:446px" width="9" height="9" viewBox="0 0 9 9"><path d="M0.5 4.5 L3.5 7.5 L8.5 1" stroke="#222" stroke-width="1.2" fill="none"/></svg>
<div style="left:729px;top:444px;width:13px;height:13px;background:#fff;border:1px solid #333"></div>
<div class="t" style="left:349.5px;top:466px;font-size:12px;font-weight:400;color:#000;font-family:'Liberation Sans';letter-spacing:0.000px;">name</div>
<div style="left:536px;top:461px;width:100px;height:20px;background:#fff;border:1px solid #7a7a7a"></div>
<div class="t" style="left:542px;top:465.5px;font-size:12px;font-weight:400;color:#000;font-family:'Liberation Sans';letter-spacing:0.000px;transform:scaleX(0.8640);transform-origin:0 0;">TEXT</div>
<svg style="position:absolute;left:622px;top:468px" width="10" height="6" viewBox="0 0 10 6"><path d="M0.5 0.5 L4.5 4.5 L8.5 0.5" stroke="#333" stroke-width="1.1" fill="none"/></svg>
<div style="left:639px;top:465px;width:13px;height:13px;background:#fff;border:1px solid #333"></div>
<svg style="position:absolute;left:641px;top:467px" width="9" height="9" viewBox="0 0 9 9"><path d="M0.5 4.5 L3.5 7.5 L8.5 1" stroke="#222" stroke-width="1.2" fill="none"/></svg>
<div style="left:669px;top:465px;width:13px;height:13px;background:#fff;border:1px solid #333"></div>
<div style="left:699px;top:465px;width:13px;height:13px;background:#fff;border:1px solid #333"></div>
<div style="left:729px;top:465px;width:13px;height:13px;background:#fff;border:1px solid #333"></div>
<div class="t" style="left:349.5px;top:487px;font-size:12px;font-weight:400;color:#000;font-family:'Liberation Sans';letter-spacing:0.000px;">mail</div>
<div style="left:536px;top:482px;width:100px;height:20px;background:#fff;border:1px solid #7a7a7a"></div>
<div class="t" style="left:542px;top:486.5px;font-size:12px;font-weight:400;color:#000;font-family:'Liberation Sans';letter-spacing:0.000px;transform:scaleX(0.8640);transform-origin:0 0;">TEXT</div>
<svg style="position:absolute;left:622px;top:489px" width="10" height="6" viewBox="0 0 10 6"><path d="M0.5 0.5 L4.5 4.5 L8.5 0.5" stroke="#333" stroke-width="1.1" fill="none"/></svg>
<div style="left:639px;top:486px;width:13px;height:13px;background:#fff;border:1px solid #333"></div>
<div style="left:669px;top:486px;width:13px;height:13px;background:#fff;border:1px solid #333"></div>
<div style="left:699px;top:486px;width:13px;height:13px;background:#fff;border:1px solid #333"></div>
<div style="left:729px;top:486px;width:13px;height:13px;background:#fff;border:1px solid #333"></div>
<div class="t" style="left:349.5px;top:508px;font-size:12px;font-weight:400;color:#000;font-family:'Liberation Sans';letter-spacing:0.000px;">age</div>
<div style="left:536px;top:503px;width:100px;height:20px;background:#fff;border:1px solid #7a7a7a"></div>
<div class="t" style="left:542px;top:507.5px;font-size:12px;font-weight:400;color:#000;font-family:'Liberation Sans';letter-spacing:0.000px;transform:scaleX(0.8530);transform-origin:0 0;">INTEGER</div>
<svg style="position:absolute;left:622px;top:510px" width="10" height="6" viewBox="0 0 10 6"><path d="M0.5 0.5 L4.5 4.5 L8.5 0.5" stroke="#333" stroke-width="1.1" fill="none"/></svg>
<div style="left:639px;top:507px;width:13px;height:13px;background:#fff;border:1px solid #333"></div>
<div style="left:669px;top:507px;width:13px;height:13px;background:#fff;border:1px solid #333"></div>
<div style="left:699px;top:507px;width:13px;height:13px;background:#fff;border:1px solid #333"></div>
<div style="left:729px;top:507px;width:13px;height:13px;background:#fff;border:1px solid #333"></div>
<div style="left:346px;top:539px;width:530px;height:15px;background:#f0f0f0"></div>
<div style="left:363px;top:540px;width:370px;height:14px;background:#cdcdcd"></div>
<svg style="position:absolute;left:350.5px;top:542.5px" width="7" height="8" viewBox="0 0 7 8"><path d="M5.8 0.8 L2 4 L5.8 7.2" stroke="#404040" stroke-width="1.9" fill="none"/></svg>
<svg style="position:absolute;left:864.5px;top:542.5px" width="7" height="8" viewBox="0 0 7 8"><path d="M1.2 0.8 L5 4 L1.2 7.2" stroke="#404040" stroke-width="1.9" fill="none"/></svg>
<div style="left:345px;top:561px;width:532px;height:128px;background:#fff;border:1px solid #828282"></div>
<div style="left:346px;top:562px;width:28px;height:109px;background:#c2c2c2"></div>
<div style="left:374px;top:562px;width:14px;height:109px;background-color:#f4f4f4;background-image:repeating-conic-gradient(#e4e4e4 0 25%, #f8f8f8 0 50%);background-size:2px 2px"></div>
<div class="t" style="left:350px;top:566px;font-size:11px;font-weight:400;color:#000;font-family:'Liberation Sans';letter-spacing:0.000px;">1</div>
<div class="t" style="left:350px;top:584px;font-size:11px;font-weight:400;color:#000;font-family:'Liberation Sans';letter-spacing:0.000px;">2</div>
<div class="t" style="left:350px;top:602px;font-size:11px;font-weight:400;color:#000;font-family:'Liberation Sans';letter-spacing:0.000px;">3</div>
<div class="t" style="left:350px;top:620px;font-size:11px;font-weight:400;color:#000;font-family:'Liberation Sans';letter-spacing:0.000px;">4</div>
<div class="t" style="left:350px;top:638px;font-size:11px;font-weight:400;color:#000;font-family:'Liberation Sans';letter-spacing:0.000px;">5</div>
<div class="t" style="left:350px;top:656px;font-size:11px;font-weight:400;color:#000;font-family:'Liberation Sans';letter-spacing:0.000px;">6</div>
<div style="left:376px;top:566px;width:12px;height:12px;background:#fff;border:1px solid #000"></div>
<div style="left:379px;top:571px;width:6px;height:1px;background:#000"></div>
<div style="left:381px;top:578px;width:1px;height:66px;background:#000"></div>
<div style="left:381px;top:643px;width:7px;height:1px;background:#000"></div>
<div class="t" style="left:388.5px;top:565px;font-size:12px;font-weight:700;color:#0c0c58;font-family:'Liberation Sans';letter-spacing:0.510px;-webkit-text-stroke:0.3px #0c0c58;">CREATE TABLE</div>
<div class="t" style="left:493px;top:565px;font-size:11px;font-weight:400;color:#6c2470;font-family:'Liberation Sans';letter-spacing:0.000px;">`</div>
<div class="t" style="left:500px;top:565px;font-size:12px;font-weight:700;color:#1a7f7a;font-family:'Liberation Sans';letter-spacing:0.146px;-webkit-text-stroke:0.3px #1a7f7a;">MyTable</div>
<div class="t" style="left:550px;top:565px;font-size:11px;font-weight:400;color:#6c2470;font-family:'Liberation Sans';letter-spacing:0.000px;">`</div>
<div class="t" style="left:562.5px;top:565px;font-size:12px;font-weight:700;color:#0c0c58;font-family:'Liberation Sans';letter-spacing:0.000px;-webkit-text-stroke:0.3px #0c0c58;">(</div>
<div class="t" style="left:411px;top:582px;font-size:11px;font-weight:400;color:#6c2470;font-family:'Liberation Sans';letter-spacing:0.000px;">`</div>
<div class="t" style="left:417.5px;top:583.5px;font-size:11px;font-weight:400;color:#6c2470;font-family:'Liberation Sans';letter-spacing:0.000px;transform:scaleX(0.9343);transform-origin:0 0;">id</div>
<div class="t" style="left:428px;top:582px;font-size:11px;font-weight:400;color:#6c2470;font-family:'Liberation Sans';letter-spacing:0.000px;">`</div>
<div class="t" style="left:448.5px;top:582.5px;font-size:12px;font-weight:700;color:#0c0c58;font-family:'Liberation Sans';letter-spacing:0.369px;-webkit-text-stroke:0.3px #0c0c58;">INTEGER PRIMARY KEY</div>
<div class="t" style="left:601px;top:582.5px;font-size:12px;font-weight:400;color:#6c2470;font-family:'Liberation Sans';letter-spacing:0.000px;transform:scaleX(0.9047);transform-origin:0 0;">AUTOINCREMENT</div>
<div class="t" style="left:695.5px;top:582.5px;font-size:12px;font-weight:700;color:#0c0c58;font-family:'Liberation Sans';letter-spacing:0.000px;-webkit-text-stroke:0.3px #0c0c58;">,</div>
<div class="t" style="left:411px;top:600px;font-size:11px;font-weight:400;color:#6c2470;font-family:'Liberation Sans';letter-spacing:0.000px;">`</div>
<div class="t" style="left:416px;top:601.5px;font-size:11px;font-weight:400;color:#6c2470;font-family:'Liberation Sans';letter-spacing:-0.344px;">name</div>
<div class="t" style="left:444px;top:600px;font-size:11px;font-weight:400;color:#6c2470;font-family:'Liberation Sans';letter-spacing:0.000px;">`</div>
<div class="t" style="left:469px;top:600.5px;font-size:12px;font-weight:400;color:#6c2470;font-family:'Liberation Sans';letter-spacing:0.000px;transform:scaleX(0.8966);transform-origin:0 0;">TEXT</div>
<div class="t" style="left:502px;top:600.5px;font-size:12px;font-weight:700;color:#0c0c58;font-family:'Liberation Sans';letter-spacing:0.375px;-webkit-text-stroke:0.3px #0c0c58;">NOT NULL,</div>
<div class="t" style="left:411px;top:618px;font-size:11px;font-weight:400;color:#6c2470;font-family:'Liberation Sans';letter-spacing:0.000px;">`</div>
<div class="t" style="left:417.5px;top:619.5px;font-size:11px;font-weight:400;color:#6c2470;font-family:'Liberation Sans';letter-spacing:0.109px;">mail</div>
<div class="t" style="left:439px;top:618px;font-size:11px;font-weight:400;color:#6c2470;font-family:'Liberation Sans';letter-spacing:0.000px;">`</div>
<div class="t" style="left:449.5px;top:618.5px;font-size:12px;font-weight:400;color:#6c2470;font-family:'Liberation Sans';letter-spacing:0.000px;transform:scaleX(0.8966);transform-origin:0 0;">TEXT</div>
<div class="t" style="left:477px;top:618.5px;font-size:12px;font-weight:700;color:#0c0c58;font-family:'Liberation Sans';letter-spacing:0.000px;-webkit-text-stroke:0.3px #0c0c58;">,</div>
<div class="t" style="left:411px;top:636px;font-size:11px;font-weight:400;color:#6c2470;font-family:'Liberation Sans';letter-spacing:0.000px;">`</div>
<div class="t" style="left:416px;top:637.5px;font-size:11px;font-weight:400;color:#6c2470;font-family:'Liberation Sans';letter-spacing:-0.180px;">age</div>
<div class="t" style="left:436px;top:636px;font-size:11px;font-weight:400;color:#6c2470;font-family:'Liberation Sans';letter-spacing:0.000px;">`</div>
<div class="t" style="left:448.5px;top:636.5px;font-size:12px;font-weight:700;color:#0c0c58;font-family:'Liberation Sans';letter-spacing:0.359px;-webkit-text-stroke:0.3px #0c0c58;">INTEGER</div>
<div class="t" style="left:389.5px;top:654.5px;font-size:12px;font-weight:700;color:#000;font-family:'Liberation Sans';letter-spacing:2.500px;-webkit-text-stroke:0.3px #000;">);</div>
<div style="left:346px;top:671px;width:530px;height:17px;background:#f0f0f0"></div>
<div style="left:363px;top:672px;width:120px;height:15px;background:#cdcdcd"></div>
<svg style="position:absolute;left:350.5px;top:675.5px" width="7" height="8" viewBox="0 0 7 8"><path d="M5.8 0.8 L2 4 L5.8 7.2" stroke="#404040" stroke-width="1.9" fill="none"/></svg>
<svg style="position:absolute;left:864.5px;top:675.5px" width="7" height="8" viewBox="0 0 7 8"><path d="M1.2 0.8 L5 4 L1.2 7.2" stroke="#404040" stroke-width="1.9" fill="none"/></svg>
<div style="left:732px;top:706px;width:73px;height:21px;background:#e1e1e1;border:2px solid #1c6fc4"></div>
<div class="t" style="left:760px;top:710.5px;font-size:12px;font-weight:400;color:#000;font-family:'Liberation Sans';letter-spacing:0.000px;">OK</div>
<div style="left:813px;top:706px;width:73px;height:21px;background:#e1e1e1;border:1px solid #adadad"></div>
<div class="t" style="left:831px;top:710.5px;font-size:12px;font-weight:400;color:#000;font-family:'Liberation Sans';letter-spacing:0.000px;transform:scaleX(0.9368);transform-origin:0 0;">Cancel</div>
<div style="left:893px;top:729px;width:2px;height:2px;background:#b0b0b0"></div>
<div style="left:893px;top:732px;width:2px;height:2px;background:#b0b0b0"></div>
<div style="left:890px;top:732px;width:2px;height:2px;background:#b0b0b0"></div>
<div style="left:893px;top:735px;width:2px;height:2px;background:#b0b0b0"></div>
<div style="left:890px;top:735px;width:2px;height:2px;background:#b0b0b0"></div>
<div style="left:887px;top:735px;width:2px;height:2px;background:#b0b0b0"></div>
<svg style="position:absolute;left:885px;top:135px" width="14" height="21" viewBox="0 0 14 21"><path d="M1.5 1.5 L1.5 17 L5.5 13 L8.5 19.5 L11 18.5 L8 12 L13 12 Z" fill="#fff" stroke="#000" stroke-width="1.2" stroke-linejoin="round"/></svg></body></html>
